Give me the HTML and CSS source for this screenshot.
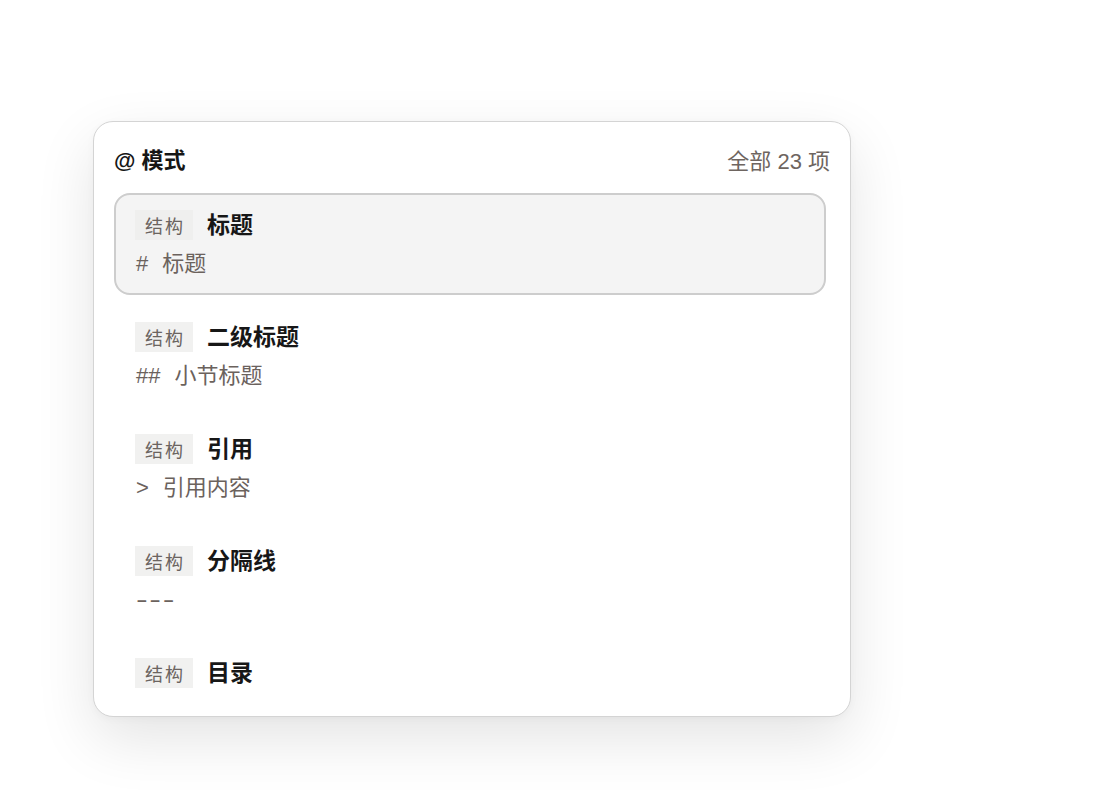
FILE: index.html
```html
<!DOCTYPE html>
<html lang="zh">
<head>
<meta charset="utf-8">
<link rel="stylesheet" href="styles.css">
</head>
<body>
<div class="card">
  <div class="header">
    <div class="title">@ 模式</div>
    <div class="count">全部 23 项</div>
  </div>
  <div class="list">
    <div class="item selected">
      <div class="row"><span class="tag">结构</span><span class="name">标题</span></div>
      <div class="sub"><span class="mark">#</span>标题</div>
    </div>
    <div class="item">
      <div class="row"><span class="tag">结构</span><span class="name">二级标题</span></div>
      <div class="sub"><span class="mark">##</span>小节标题</div>
    </div>
    <div class="item">
      <div class="row"><span class="tag">结构</span><span class="name">引用</span></div>
      <div class="sub"><span class="mark">&gt;</span>引用内容</div>
    </div>
    <div class="item">
      <div class="row"><span class="tag">结构</span><span class="name">分隔线</span></div>
      <div class="sub"><span class="rule">---</span></div>
    </div>
    <div class="item">
      <div class="row"><span class="tag">结构</span><span class="name">目录</span></div>
    </div>
  </div>
</div>
</body>
</html>
```

FILE: styles.css
```css
html, body {
  margin: 0;
  padding: 0;
  background: #ffffff;
}
body {
  min-height: 790px;
  font-family: "Liberation Sans", "Noto Sans CJK SC", sans-serif;
  color: #1a1a1a;
  padding-top: 121px;
  box-sizing: border-box;
}
.card {
  box-sizing: border-box;
  width: 758px;
  height: 596px;
  margin: 0 0 0 93px;
  border: 1.5px solid #d4d4d4;
  border-radius: 20px;
  background: #ffffff;
  box-shadow: 0 22px 60px rgba(0, 0, 0, 0.11), 0 2px 8px rgba(0, 0, 0, 0.03);
  padding: 20px 20px 0 20px;
  overflow: hidden;
  display: flex;
  flex-direction: column;
}
.header {
  display: flex;
  justify-content: space-between;
  align-items: center;
  height: 36px;
  margin-bottom: 15px;
}
.title {
  font-size: 22px;
  font-weight: 700;
  color: #161616;
  padding-bottom: 4px;
}
.count {
  font-size: 22px;
  color: #6e6560;
  padding-bottom: 2px;
}
.list {
  padding-right: 4px;
  flex: 1;
  min-height: 0;
  overflow: hidden;
  display: flex;
  flex-direction: column;
  gap: 10px;
}
.item {
  box-sizing: border-box;
  border: 2px solid transparent;
  border-radius: 16px;
  padding: 15px 19px 15px 19px;
  flex: none;
}
.item.selected {
  border-color: #cdcdcd;
  background: #f4f4f4;
}
.row {
  display: flex;
  align-items: center;
  height: 30px;
  gap: 14px;
}
.tag {
  display: inline-flex;
  align-items: center;
  justify-content: center;
  width: 58px;
  height: 30px;
  background: #f1f1f0;
  color: #6b6460;
  font-size: 18px;
  letter-spacing: 2px;
  text-indent: 2px;
}
.selected .tag {
  background: #efefee;
}
.name {
  font-size: 23px;
  font-weight: 700;
  color: #171717;
  padding-bottom: 5px;
}
.sub {
  margin-top: 10px;
  height: 28px;
  line-height: 28px;
  font-size: 22px;
  color: #6b625d;
  padding-left: 1px;
}
.mark {
  display: inline-block;
  margin-right: 14px;
}
.rule {
  display: inline-block;
  transform: scaleX(1.6);
  transform-origin: left center;
  letter-spacing: 1px;
  color: #6b625d;
}
```
